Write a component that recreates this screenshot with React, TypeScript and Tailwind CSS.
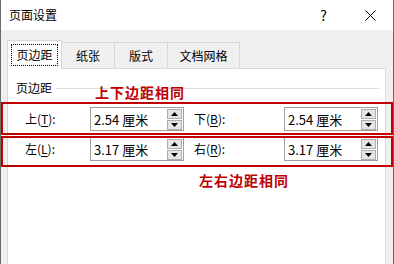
import React from "react";

const font = { fontFamily: '"Microsoft YaHei UI", "Noto Sans CJK SC", "Noto Sans", sans-serif' };

const Spinner: React.FC = () => (
  <div className="flex flex-col gap-[1px] mr-[1px]">
    <div className="w-[15px] h-[10px] bg-[#e5e5e5] border border-[#adadad] flex items-center justify-center">
      <svg width="7" height="4" viewBox="0 0 7 4"><path d="M0 4 L3.5 0 L7 4 Z" fill="#000" /></svg>
    </div>
    <div className="w-[15px] h-[10px] bg-[#e5e5e5] border border-[#adadad] flex items-center justify-center">
      <svg width="7" height="4" viewBox="0 0 7 4"><path d="M0 0 L3.5 4 L7 0 Z" fill="#000" /></svg>
    </div>
  </div>
);

const SpinInput: React.FC<{ value: string }> = ({ value }) => (
  <div className="w-[94px] h-[24px] border border-[#a0a0a0] bg-white flex items-center justify-between">
    <span className="pl-[3px] text-[13px] text-black leading-none">{value}</span>
    <Spinner />
  </div>
);

const Label: React.FC<{ ch: string; k: string; w: string }> = ({ ch, k, w }) => (
  <div className={`${w} text-[12px] text-black leading-none`}>
    {ch}(<span className="underline underline-offset-2">{k}</span>):
  </div>
);

const Row: React.FC<{ a: [string, string]; b: [string, string]; va: string; vb: string }> = ({ a, b, va, vb }) => (
  <div className="flex items-center ml-[17px]">
    <Label ch={a[0]} k={a[1]} w="w-[65px]" />
    <SpinInput value={va} />
    <div className="w-[10px]" />
    <Label ch={b[0]} k={b[1]} w="w-[90px]" />
    <SpinInput value={vb} />
  </div>
);

export default function App() {
  const tabs = [
    { t: "纸张", w: "w-[53px]" },
    { t: "版式", w: "w-[53px]" },
    { t: "文档网格", w: "w-[72px]" },
  ];
  return (
    <div className="relative w-[394px] h-[264px] overflow-hidden bg-[#f0f0f0] border-x border-[#6b6b6b] flex flex-col" style={font}>
      <div className="h-[30px] bg-white flex items-center shrink-0">
        <span className="pl-[8px] text-[12px] text-black">页面设置</span>
        <span className="ml-auto text-[14px] text-black mr-[38px]">?</span>
        <svg width="11" height="11" viewBox="0 0 11 11" className="mr-[17px]">
          <path d="M0.5 0.5 L10.5 10.5 M10.5 0.5 L0.5 10.5" stroke="#000" strokeWidth="1" />
        </svg>
      </div>

      <div className="flex items-end pl-[6px] pt-[10px] shrink-0">
        <div className="relative z-10 -mb-px w-[55px] h-[29px] bg-white border-x border-t border-[#d9d9d9] flex items-center justify-center">
          <div className="px-[4px] py-[2px] border border-dotted border-black text-[12px] text-black leading-[16px]">页边距</div>
        </div>
        {tabs.map((tab) => (
          <div key={tab.t} className={`${tab.w} h-[26px] border-r border-t border-[#d9d9d9] flex items-center justify-center text-[12px] text-black`}>
            {tab.t}
          </div>
        ))}
      </div>

      <div className="flex-1 ml-[6px] w-[379px] bg-white border-x border-t border-[#d9d9d9] flex flex-col">
        <div className="flex items-center h-[20px] mt-[9px] pl-[8px] pr-[6px]">
          <span className="text-[12px] text-black">页边距</span>
          <div className="flex-1 h-px bg-[#dcdcdc] ml-[4px]" />
        </div>
        <div className="flex flex-col gap-[6px] mt-[9px]">
          <Row a={["上", "T"]} b={["下", "B"]} va="2.54 厘米" vb="2.54 厘米" />
          <Row a={["左", "L"]} b={["右", "R"]} va="3.17 厘米" vb="3.17 厘米" />
        </div>
      </div>

      {/* annotations */}
      <span className="absolute left-[94px] top-[82px] text-[14px] font-bold text-[#c00000] tracking-[1px]">上下边距相同</span>
      <span className="absolute left-[198px] top-[170px] text-[14px] font-bold text-[#c00000] tracking-[1px]">左右边距相同</span>
      <div className="absolute left-0 top-[102px] w-[392px] h-[33px] border-2 border-[#c00000]" />
      <div className="absolute left-0 top-[136px] w-[392px] h-[31px] border-2 border-[#c00000]" />
    </div>
  );
}
